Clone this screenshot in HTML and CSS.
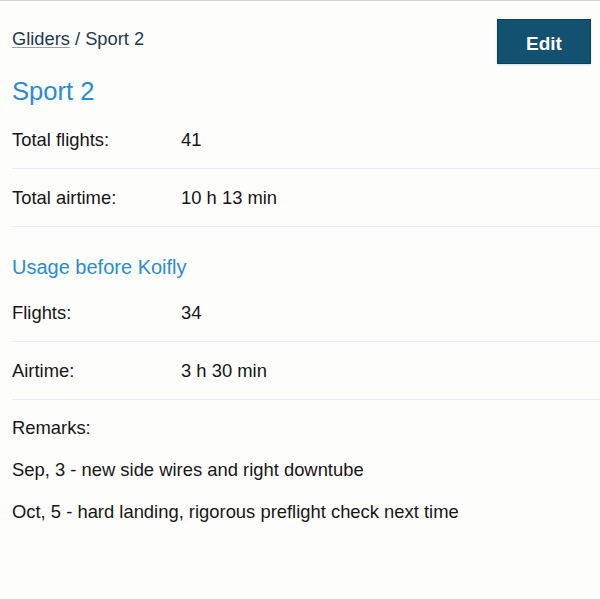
FILE: index.html
```html
<!DOCTYPE html>
<html lang="en">
<head>
<meta charset="utf-8">
<title>Sport 2</title>
<link rel="stylesheet" href="styles.css">
</head>
<body>
<main class="page">
  <header class="header">
    <nav class="breadcrumbs"><a class="crumb-link" href="#">Gliders</a> / Sport 2</nav>
    <button class="edit-btn" type="button">Edit</button>
  </header>
  <h1 class="title">Sport 2</h1>
  <div class="row">
    <span class="label">Total flights:</span>
    <span class="value">41</span>
  </div>
  <div class="row">
    <span class="label">Total airtime:</span>
    <span class="value">10 h 13 min</span>
  </div>
  <h2 class="section-title">Usage before Koifly</h2>
  <div class="row">
    <span class="label">Flights:</span>
    <span class="value">34</span>
  </div>
  <div class="row">
    <span class="label">Airtime:</span>
    <span class="value">3 h 30 min</span>
  </div>
  <div class="remarks">
    <p class="remarks-label">Remarks:</p>
    <p class="remark">Sep, 3 - new side wires and right downtube</p>
    <p class="remark">Oct, 5 - hard landing, rigorous preflight check next time</p>
  </div>
</main>
</body>
</html>
```
FILE: styles.css
```css
html, body {
  margin: 0;
  padding: 0;
  background: #fdfdfc;
}
body {
  border-top: 1px solid #d4d7da;
  font-family: "Liberation Sans", Arial, sans-serif;
  font-size: 18.4px;
  line-height: 22px;
  color: #161616;
}
.page {
  padding: 0 9px 0 12px;
}
.header {
  display: flex;
  justify-content: space-between;
  align-items: flex-start;
  margin-top: 18px;
}
.breadcrumbs {
  margin-top: 9px;
  color: #22394f;
  font-size: 18.3px;
}
.crumb-link {
  color: #22394f;
  text-decoration: underline;
  text-decoration-color: #9aa3ad;
  text-underline-offset: 2px;
}
.edit-btn {
  width: 94px;
  height: 45px;
  border: 1px solid #0d3f59;
  background: #12516f;
  color: #ffffff;
  font-family: "Liberation Sans", Arial, sans-serif;
  font-size: 19px;
  font-weight: bold;
  padding: 4px 0 0;
  box-shadow: 0 1px 2px rgba(0,0,0,0.15);
}
.title {
  margin: 12px 0 5px;
  font-size: 25.6px;
  line-height: 30px;
  font-weight: normal;
  color: #2a8ccf;
}
.row {
  display: flex;
  padding: 18px 0 17px;
  border-bottom: 1px solid #e6ecf2;
  margin-right: -9px;
}
.label {
  width: 169px;
}
.section-title {
  margin: 28px 0 5px;
  font-size: 20px;
  line-height: 24px;
  font-weight: normal;
  color: #2a8ccf;
}
.remarks {
  padding-top: 17px;
}
.remarks p {
  margin: 0 0 20px;
}
```
